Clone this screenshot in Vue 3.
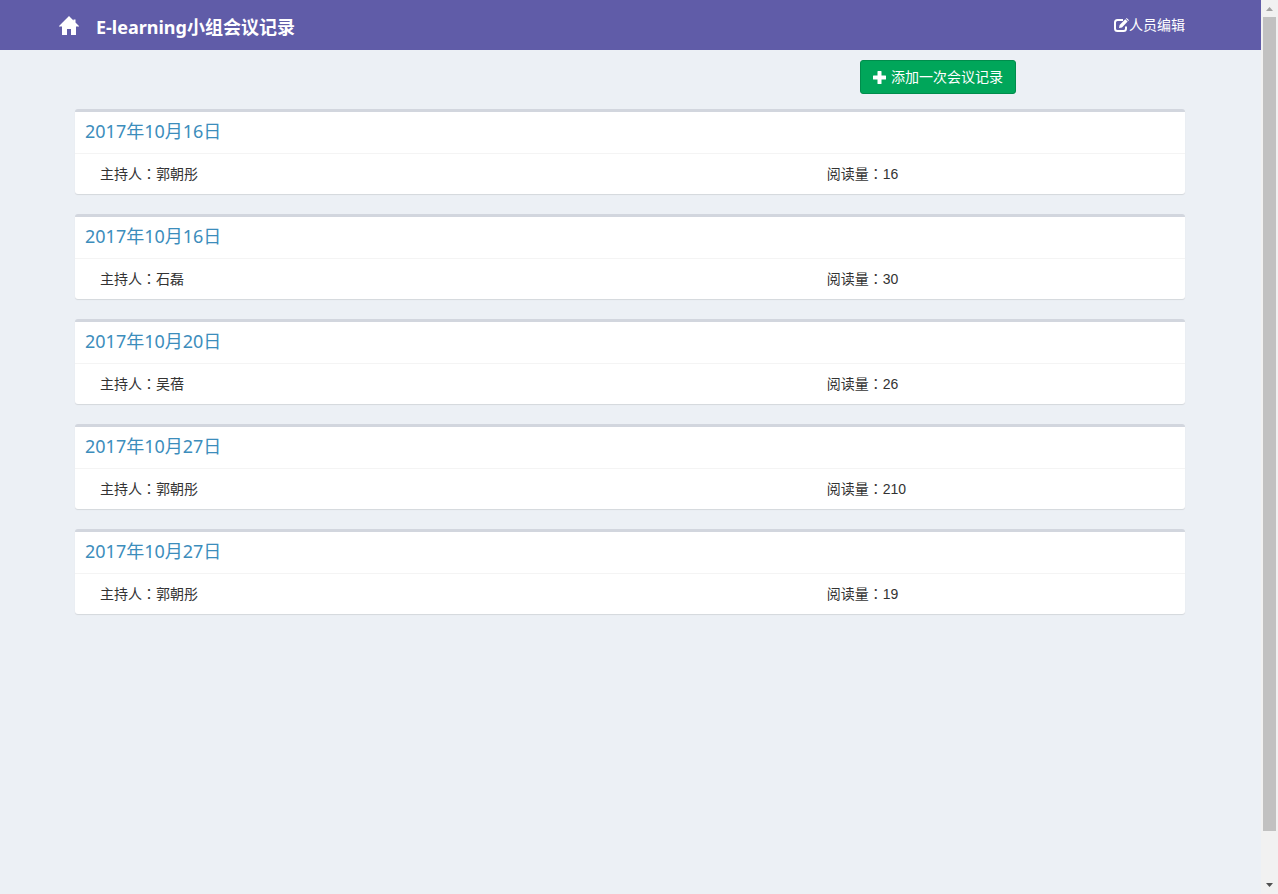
<script setup>
const meetings = [
  { date: '2017年10月16日', host: '郭朝彤', reads: 16 },
  { date: '2017年10月16日', host: '石磊', reads: 30 },
  { date: '2017年10月20日', host: '吴蓓', reads: 26 },
  { date: '2017年10月27日', host: '郭朝彤', reads: 210 },
  { date: '2017年10月27日', host: '郭朝彤', reads: 19 },
]
</script>

<template>
  <div class="shell">
    <div class="page">
      <header class="navbar">
        <div class="navbar-inner">
          <a class="home" href="#" aria-label="Home">
            <svg viewBox="0 0 20 19" width="20" height="19" aria-hidden="true">
              <path fill="currentColor" d="M10 0 L14.500 4.500 V3.500 H16.500 V6.500 L20 10 V10.500 H17 V19 H12 V13 H8 V19 H3 V10.500 H0 V10 Z" />
            </svg>
          </a>
          <h1 class="brand">E-learning小组会议记录</h1>
          <a class="edit" href="#">
            <svg viewBox="0 0 15 14" width="15" height="14" aria-hidden="true">
              <path fill="none" stroke="currentColor" stroke-width="2" d="M9 2 H3.500 Q1 2 1 4.500 V10.500 Q1 13 3.500 13 H9.500 Q12 13 12 10.500 V8.500" />
              <path fill="currentColor" d="M5 10 L5.600 7 L11.300 1.300 L13.600 3.600 L8 9.400 Z M12 .7 L12.700 0 L15 2.200 L14.200 3 Z" />
            </svg><span>人员编辑</span>
          </a>
        </div>
      </header>
      <main class="content">
        <div class="toolbar">
          <button class="add" type="button">
            <svg viewBox="0 0 13 13" width="13" height="13" aria-hidden="true">
              <path fill="currentColor" d="M5 0 H8 Q8.500 0 8.500 .5 V4.500 H12.500 Q13 4.500 13 5 V8 Q13 8.500 12.500 8.500 H8.500 V12.500 Q8.500 13 8 13 H5 Q4.500 13 4.500 12.500 V8.500 H.5 Q0 8.500 0 8 V5 Q0 4.500 .5 4.500 H4.500 V.5 Q4.500 0 5 0 Z" />
            </svg>
            <span>添加一次会议记录</span>
          </button>
        </div>
        <article v-for="(m, i) in meetings" :key="i" class="box">
          <h2 class="box-header"><a href="#">{{ m.date }}</a></h2>
          <div class="box-body">
            <div>主持人<span class="colon">：</span>{{ m.host }}</div>
            <div>阅读量<span class="colon">：</span>{{ m.reads }}</div>
          </div>
        </article>
      </main>
    </div>
    <div class="scrollbar" aria-hidden="true">
      <svg class="arrow up" viewBox="0 0 17 17"><path d="M5 11 L8.500 7 L12 11 Z" /></svg>
      <div class="track"><div class="thumb"></div></div>
      <svg class="arrow" viewBox="0 0 17 17"><path d="M5 6 L8.500 10 L12 6 Z" /></svg>
    </div>
  </div>
</template>

<style>
body {
  margin: 0;
  background: #ecf0f5;
}
</style>

<style scoped>
* {
  box-sizing: border-box;
}
.shell {
  display: flex;
  min-height: 100vh;
  font: 14px/20px "Liberation Sans", "Noto Sans CJK SC", sans-serif;
  color: #333;
}
.page {
  flex: 1;
  min-width: 0;
  background: #ecf0f5;
}
a {
  text-decoration: none;
}
.navbar {
  background: #605ca8;
  color: #fff;
}
.navbar-inner {
  display: flex;
  align-items: center;
  height: 50px;
  max-width: 1143px;
  margin: 0 auto;
  padding-right: 17px;
}
.home {
  display: flex;
  color: #fff;
}
.brand {
  margin: 4px 0 0 17px;
  font: bold 18px/20px "Noto Sans", "Noto Sans CJK SC", sans-serif;
}
.edit {
  display: flex;
  align-items: center;
  margin-left: auto;
  color: #fff;
}
.content {
  max-width: 1143px;
  margin: 0 auto;
  padding: 10px 17px 10px 16px;
}
.toolbar {
  display: flex;
  justify-content: flex-end;
  padding-right: 169px;
  margin-bottom: 15px;
}
.add {
  display: flex;
  align-items: center;
  gap: 5px;
  height: 34px;
  padding: 0 12px;
  border: 1px solid #008d4c;
  border-radius: 3px;
  background: #00a65a;
  color: #fff;
  font: inherit;
}
.box {
  margin-bottom: 20px;
  border-top: 3px solid #d2d6de;
  border-radius: 3px;
  background: #fff;
  box-shadow: 0 1px 1px rgba(0, 0, 0, 0.1);
}
.box-header {
  margin: 0;
  padding: 9px 10px 11px;
  border-bottom: 1px solid #f4f4f4;
  font: 18px/21px "Noto Sans", "Noto Sans CJK SC", sans-serif;
}
.box-header a {
  color: #3c8dbc;
}
.box-body {
  display: grid;
  grid-template-columns: 2fr 1fr;
  padding: 10px;
}
.box-body div {
  padding: 0 15px;
}
.colon {
  font-family: "Noto Sans CJK TC", sans-serif;
  line-height: 1;
}
.scrollbar {
  display: flex;
  flex-direction: column;
  flex: 0 0 17px;
  background: #f1f1f1;
}
.arrow {
  width: 17px;
  height: 17px;
  fill: #505050;
}
.arrow.up {
  fill: #a3a3a3;
}
.track {
  flex: 1;
  display: flex;
  flex-direction: column;
  padding: 0 2px 46px;
}
.thumb {
  flex: 1;
  background: #c1c1c1;
}
</style>
